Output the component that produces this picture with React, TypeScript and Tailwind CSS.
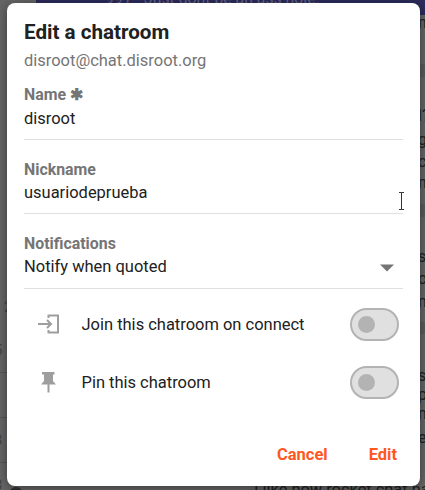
import type { ReactNode } from "react";

function Field({ label, value, children, h, valueClass = "" }: { label: string; value: string; children?: ReactNode; h: string; valueClass?: string }) {
  return (
    <div className={`flex flex-col border-b border-[#e0e0e0] ${h}`}>
      <div className="text-[15.900px] leading-6 font-bold text-[#757575]">{label}</div>
      <div className={`flex h-[23px] items-center justify-between ${valueClass}`}>
        <span>{value}</span>
        {children}
      </div>
    </div>
  );
}

function ToggleRow({ icon, label }: { icon: ReactNode; label: string }) {
  return (
    <div className="flex h-[58px] items-center">
      <div className="flex w-[57.5px] pl-3">{icon}</div>
      <span className="flex-1 pt-[2px]">{label}</span>
      <span className="mr-1 flex h-[33px] w-[49px] items-center rounded-full border-2 border-[#b3b3b3] bg-[#e0e0e0] pl-1.5">
        <span className="h-[17px] w-[17px] rounded-full bg-[#b3b3b3]" />
      </span>
    </div>
  );
}

const fragments = [
  { top: "top-[13px]", text: "n" },
  { top: "top-[106px]", text: "l?" },
  { top: "top-[130px]", text: "ge" },
  { top: "top-[152px]", text: "c" },
  { top: "top-[173px]", text: "n" },
  { top: "top-[247px]", text: "s" },
  { top: "top-[269px]", text: "o" },
  { top: "top-[292px]", text: "n" },
  { top: "top-[366px]", text: "s" },
  { top: "top-[385px]", text: "p" },
  { top: "top-[404px]", text: "n" },
  { top: "top-[428px]", text: "e" },
];

const leftMarks = [
  { top: "top-[297px]", left: "left-[4px]", text: "2" },
  { top: "top-[340px]", left: "-left-[6px]", text: "5" },
  { top: "top-[430px]", left: "-left-[6px]", text: "3" },
  { top: "top-[475px]", left: "-left-[6px]", text: "3" },
];

export default function App() {
  return (
    <div className="relative h-[490px] w-[425px] overflow-hidden bg-[#666] font-['Roboto',sans-serif] text-[16.480px] text-[#212121]">
      <div className="absolute top-0 right-0 left-9 h-[15px] bg-[#2d2c5c]" />
      <div className="absolute -top-[11px] left-[105px] flex text-[15.800px] leading-5 whitespace-pre text-[#66668a]">
        <span className="w-[39px]">991</span>
        <span>Just dont be an ass hole.</span>
      </div>
      <div className="absolute top-[64px] right-0 h-[13px] w-[6px] bg-[#5c5c5c]" />
      <div className="absolute top-[204px] right-0 h-[13px] w-[6px] bg-[#5c5c5c]" />
      <div className="absolute top-[322px] right-0 h-[12px] w-[6px] bg-[#5c5c5c]" />
      {fragments.map((f) => (
        <span key={f.top} className={`absolute left-[418px] text-[16px] leading-5 ${f.top}`}>{f.text}</span>
      ))}
      {leftMarks.map((m) => (
        <span key={m.top} className={`absolute text-[15px] leading-5 text-[#444] ${m.left} ${m.top}`}>{m.text}</span>
      ))}
      <div className="absolute top-[372px] h-px w-9 bg-[#555]" />
      <div className="absolute top-[417px] h-px w-9 bg-[#555]" />
      <div className="absolute top-[462px] h-px w-9 bg-[#555]" />
      <div className="absolute top-[487px] left-[9px] h-4 w-[14px] rounded-full bg-[#333]" />
      <div className="absolute top-[480px] left-[254px] text-[16.400px] leading-5 whitespace-nowrap">I like how rocket chat has</div>

      <div className="relative mt-[3px] ml-[7px] flex h-[483px] w-[413px] flex-col rounded-[8px] bg-white px-[17px] pt-[14px] shadow-[0_2px_12px_rgba(0,0,0,0.45)]">
        <h1 className="text-[20.600px] leading-[30px] font-bold">Edit a chatroom</h1>
        <div className="h-[36px] pt-[3px] leading-[21px] text-[#757575]">disroot@chat.disroot.org</div>
        <Field label="Name ✱" value="disroot" h="h-[57px]" valueClass="pt-[2px]" />
        <div className="h-[18px]" />
        <Field label="Nickname" value="usuariodeprueba" h="h-[56px]" />
        <div className="h-[18px]" />
        <Field label="Notifications" value="Notify when quoted" h="h-[57px]">
          <svg className="mr-[9px]" width="14" height="8" viewBox="0 0 14 8"><path d="M0 .5h14L7 7.500z" fill="#757575" /></svg>
        </Field>
        <div className="h-[6px]" />
        <ToggleRow
          label="Join this chatroom on connect"
          icon={
            <svg width="25" height="24" viewBox="0 0 25 24" fill="none" stroke="#9e9e9e" strokeWidth="2">
              <path d="M12.500 6V3.500H22v17h-9.500V18M2 12h13M11 8l4 4-4 4" />
            </svg>
          }
        />
        <ToggleRow
          label="Pin this chatroom"
          icon={
            <svg width="25" height="24" viewBox="0 0 25 24" fill="#9e9e9e">
              <path d="M6 2h12.500v2.500h-1.500v6.500l3 3.500H5l3-3.500V4.500H6zM11.500 14.500h2V22.500h-2z" />
            </svg>
          }
        />
        <div className="mt-[32px] flex justify-end gap-[41px] pr-[6px] leading-6 font-bold text-[#ff5722]">
          <button>Cancel</button>
          <button>Edit</button>
        </div>
      </div>
      <svg className="absolute top-[191px] left-[397px]" width="10" height="20" viewBox="0 0 10 20" fill="none">
        <path d="M2 1.500h2.500v17H2M7 1.500H4.500M7 18.500H4.500" stroke="#333" />
      </svg>
    </div>
  );
}
